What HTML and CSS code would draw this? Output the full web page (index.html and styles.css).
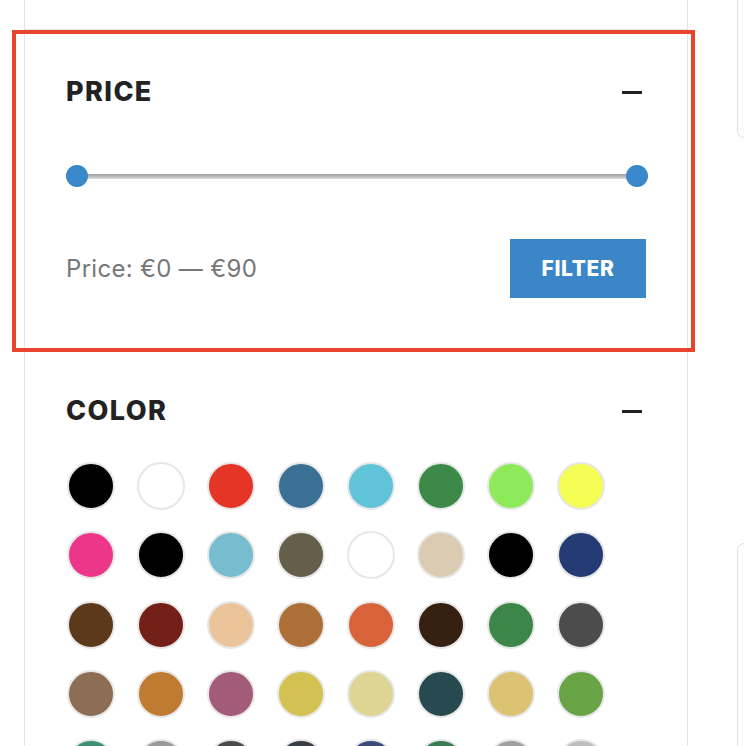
FILE: index.html
```html
<!DOCTYPE html>
<html lang="en">
<head>
<meta charset="utf-8">
<title>Filters</title>
<link rel="stylesheet" href="styles.css">
</head>
<body>
<div class="page">
  <aside class="sidebar">
    <div class="widget-tail"></div>

    <section class="widget widget-price">
      <header class="widget-head">
        <h3 class="widget-title">PRICE</h3>
        <span class="toggle"></span>
      </header>
      <div class="slider">
        <div class="track"></div>
        <span class="handle handle-min"></span>
        <span class="handle handle-max"></span>
      </div>
      <div class="price-row">
        <span class="price-label">Price: €0 — €90</span>
        <button class="filter-btn">FILTER</button>
      </div>
    </section>

    <section class="widget widget-color">
      <header class="widget-head">
        <h3 class="widget-title">COLOR</h3>
        <span class="toggle"></span>
      </header>
      <div class="swatches">
        <span class="swatch" style="background:#000000"></span>
        <span class="swatch" style="background:#ffffff"></span>
        <span class="swatch" style="background:#e43527"></span>
        <span class="swatch" style="background:#397094"></span>
        <span class="swatch" style="background:#61c3d7"></span>
        <span class="swatch" style="background:#3d8a48"></span>
        <span class="swatch" style="background:#8eea5a"></span>
        <span class="swatch" style="background:#f4fd53"></span>

        <span class="swatch" style="background:#ec3689"></span>
        <span class="swatch" style="background:#000000"></span>
        <span class="swatch" style="background:#77bccf"></span>
        <span class="swatch" style="background:#655e4a"></span>
        <span class="swatch" style="background:#ffffff"></span>
        <span class="swatch" style="background:#dbcbb2"></span>
        <span class="swatch" style="background:#000000"></span>
        <span class="swatch" style="background:#253b73"></span>

        <span class="swatch" style="background:#5c391b"></span>
        <span class="swatch" style="background:#742018"></span>
        <span class="swatch" style="background:#ecc49c"></span>
        <span class="swatch" style="background:#ac6f37"></span>
        <span class="swatch" style="background:#d8623a"></span>
        <span class="swatch" style="background:#352011"></span>
        <span class="swatch" style="background:#3d8649"></span>
        <span class="swatch" style="background:#4c4c4c"></span>

        <span class="swatch" style="background:#8d6d53"></span>
        <span class="swatch" style="background:#c07b33"></span>
        <span class="swatch" style="background:#a25b78"></span>
        <span class="swatch" style="background:#d3c152"></span>
        <span class="swatch" style="background:#ded595"></span>
        <span class="swatch" style="background:#264a50"></span>
        <span class="swatch" style="background:#dcc273"></span>
        <span class="swatch" style="background:#68a446"></span>

        <span class="swatch" style="background:#3d8f70"></span>
        <span class="swatch" style="background:#9a9a9a"></span>
        <span class="swatch" style="background:#4a4a4a"></span>
        <span class="swatch" style="background:#3a3f47"></span>
        <span class="swatch" style="background:#3e4a78"></span>
        <span class="swatch" style="background:#3b7b55"></span>
        <span class="swatch" style="background:#a0a0a0"></span>
        <span class="swatch" style="background:#bdbdbd"></span>
      </div>
    </section>

    <div class="highlight"></div>
  </aside>

  <div class="side-cards">
    <div class="card card-top"></div>
    <div class="card card-bottom"></div>
  </div>
</div>
</body>
</html>
```

FILE: styles.css
```css
* {
  box-sizing: border-box;
}

html, body {
  margin: 0;
  padding: 0;
  background: #ffffff;
  overflow: hidden;
}

body {
  font-family: "Inter", "Liberation Sans", sans-serif;
  color: #222222;
  width: 744px;
  height: 746px;
}

.page {
  display: flex;
  align-items: flex-start;
  height: 746px;
}

.sidebar {
  position: relative;
  margin-left: 24px;
  width: 664px;
  flex: none;
  min-height: 746px;
  border-left: 1px solid #e4e4e4;
  border-right: 1px solid #e4e4e4;
}

.widget-tail {
  height: 29px;
}

.widget {
  border-top: 1px solid #e6e6e6;
  padding: 0 41px;
}

.widget-price {
  padding-top: 47px;
  padding-bottom: 52px;
}

.widget-color {
  padding-top: 45px;
}

.widget-head {
  display: flex;
  align-items: center;
  justify-content: space-between;
  height: 30px;
}

.widget-title {
  margin: 0;
  font-size: 27px;
  line-height: 30px;
  font-weight: 800;
  letter-spacing: 1.4px;
  color: #222222;
}

.toggle {
  display: block;
  width: 20px;
  height: 3px;
  background: #222222;
  margin-right: 4px;
  margin-top: 1px;
}

.slider {
  position: relative;
  height: 22px;
  margin-top: 58px;
  margin-right: -2px;
  padding: 0 11px;
  display: flex;
  align-items: center;
}

.track {
  width: 100%;
  height: 5px;
  background: linear-gradient(#9c9c9c, #dcdcdc);
}

.handle {
  position: absolute;
  top: 0;
  width: 22px;
  height: 22px;
  border-radius: 50%;
  background: #3a87c9;
}

.handle-min {
  left: 0;
}

.handle-max {
  right: 0;
}

.price-row {
  display: flex;
  align-items: center;
  justify-content: space-between;
  margin-top: 52px;
}

.price-label {
  font-size: 24px;
  color: #777777;
  letter-spacing: 0.3px;
}

.filter-btn {
  width: 136px;
  height: 59px;
  border: 0;
  padding: 0;
  background: #3b86c7;
  color: #ffffff;
  font-family: "Inter", "Liberation Sans", sans-serif;
  font-weight: 800;
  font-size: 21px;
  letter-spacing: 0.6px;
}

.swatches {
  display: grid;
  grid-template-columns: repeat(8, 48px);
  column-gap: 22px;
  row-gap: 21.25px;
  margin-top: 36px;
  padding-left: 1px;
}

.swatch {
  display: block;
  width: 48px;
  height: 48px;
  border-radius: 50%;
  border: 2px solid #e7e7e7;
}

.highlight {
  position: absolute;
  left: -13px;
  top: 30px;
  width: 683px;
  height: 322px;
  border: 4px solid #e8452c;
  pointer-events: none;
}

.side-cards {
  margin-left: 49px;
  flex: 1;
  display: flex;
  flex-direction: column;
}

.card {
  width: 60px;
  border: 1px solid #e2e2e2;
  border-right: 0;
  background: #fdfdfd;
}

.card-top {
  height: 138px;
  border-top: 0;
  border-bottom-left-radius: 7px;
}

.card-bottom {
  margin-top: 405px;
  height: 220px;
  border-bottom: 0;
  border-top-left-radius: 7px;
}
```
